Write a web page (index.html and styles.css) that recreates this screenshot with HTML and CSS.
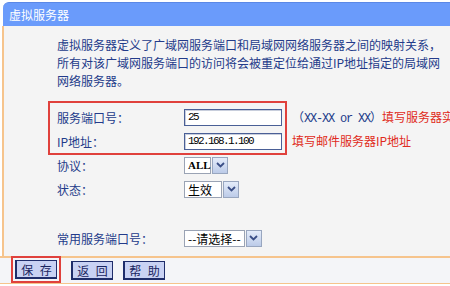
FILE: index.html
```html
<!DOCTYPE html>
<html lang="zh-CN">
<head>
    <meta charset="UTF-8">
    <title>虚拟服务器</title>
    <link rel="stylesheet" href="styles.css">
</head>
<body>
    <div class="panel">
        <div class="title">虚拟服务器</div>
        <div class="content">
            <p class="intro">虚拟服务器定义了广域网服务端口和局域网网络服务器之间的映射关系，<br>所有对该广域网服务端口的访问将会被重定位给通过IP地址指定的局域网<br>网络服务器。</p>

            <div class="marked-group">
                <div class="marked">
                    <div class="row">
                        <span class="label">服务端口号：</span>
                        <input class="field" type="text" value="25">
                    </div>
                    <div class="row">
                        <span class="label">IP地址：</span>
                        <input class="field" type="text" value="192.168.1.100">
                    </div>
                </div>
                <div class="hints">
                    <div class="hint"><span class="fmt">（<span class="latin">XX-XX or XX</span>）</span>填写服务器实际端口号</div>
                    <div class="hint">填写邮件服务器IP地址</div>
                </div>
            </div>

            <div class="row">
                <span class="label">协议：</span>
                <span class="select">
                    <span class="select-value mono-all">ALL</span>
                    <span class="select-btn"><svg width="9" height="6" viewBox="0 0 9 6"><path d="M1 1l3.5 3.5L8 1" fill="none" stroke="#3a4e86" stroke-width="1.8"/></svg></span>
                </span>
            </div>
            <div class="row">
                <span class="label">状态：</span>
                <span class="select">
                    <span class="select-value status">生效</span>
                    <span class="select-btn"><svg width="9" height="6" viewBox="0 0 9 6"><path d="M1 1l3.5 3.5L8 1" fill="none" stroke="#3a4e86" stroke-width="1.8"/></svg></span>
                </span>
            </div>

            <div class="row common">
                <span class="label">常用服务端口号：</span>
                <span class="select">
                    <span class="select-value">--请选择--</span>
                    <span class="select-btn"><svg width="9" height="6" viewBox="0 0 9 6"><path d="M1 1l3.5 3.5L8 1" fill="none" stroke="#3a4e86" stroke-width="1.8"/></svg></span>
                </span>
            </div>
        </div>
        <div class="actions">
            <span class="marked-btn"><button class="btn">保 存</button></span>
            <button class="btn">返 回</button>
            <button class="btn">帮 助</button>
        </div>
    </div>
</body>
</html>
```

FILE: styles.css
```css
body {
    margin: 0;
    background: #ffffff;
    font-family: "Noto Sans CJK SC", "Liberation Sans", sans-serif;
    font-size: 12px;
    color: #233b8a;
    overflow: hidden;
}
.panel {
    width: 480px;
    padding-top: 2px;
}
.title {
    margin-left: 3px;
    height: 23px;
    line-height: 23px;
    padding-left: 6px;
    background: #6a9bfb;
    border-top: 1px solid #5b88e6;
    border-radius: 6px 0 0 0;
    color: #ffffff;
    font-size: 12px;
}
.content {
    margin-left: 2px;
    border-left: 2px solid #f6c48c;
    background: #f4f4f4;
    padding: 10px 0 6px 53px;
}
.intro {
    margin: 0;
    line-height: 18px;
}
.marked-group {
    display: flex;
    margin: 11px 0 -2px -9px;
}
.marked {
    border: 2px solid #e0413c;
    padding: 2px 3px 0 7px;
}
.row {
    display: flex;
    align-items: center;
    height: 24px;
}
.label {
    width: 127px;
    flex: none;
}
.field {
    width: 98px;
    height: 17px;
    box-sizing: border-box;
    margin: 0;
    padding: 0 3px;
    border: 1px solid #4a5f96;
    box-shadow: inset 1px 1px 0 #c8cedc;
    background: #ffffff;
    color: #000000;
    font-family: "Liberation Mono", monospace;
    font-size: 11px;
    letter-spacing: -1.6px;
}
.hints {
    margin-left: 5px;
    padding-top: 4px;
    color: #e02a20;
    white-space: nowrap;
}
.hint {
    height: 24px;
    line-height: 24px;
}
.fmt {
    color: #233b8a;
}
.latin {
    font-family: "Liberation Mono", monospace;
    letter-spacing: -1.2px;
}
.select {
    display: flex;
    gap: 1px;
    height: 17px;
}
.select-value {
    height: 17px;
    box-sizing: border-box;
    padding: 0 3px;
    border: 1px solid #9aa3b4;
    background: #ffffff;
    color: #000000;
    line-height: 15px;
    white-space: nowrap;
}
.mono-all {
    width: 27px;
    font-family: "Liberation Serif", serif;
    font-weight: bold;
    font-size: 11px;
}
.status {
    width: 38px;
}
.select-btn {
    width: 16px;
    height: 17px;
    box-sizing: border-box;
    border: 1px solid #98a6bf;
    background: linear-gradient(#e4ecfa, #bccbe8);
    display: flex;
    align-items: center;
    justify-content: center;
}
.common {
    margin-top: 25px;
}
.actions {
    display: flex;
    align-items: center;
    gap: 10px;
    height: 25px;
    padding-left: 11px;
    background: #f4f5f8;
    border-top: 2px solid #f6c48c;
    border-bottom: 1px solid #f6c48c;
}
.marked-btn {
    margin-top: -2px;
    padding: 2px;
    border: 2px solid #e0413c;
    display: flex;
}
.btn {
    width: 42px;
    height: 19px;
    box-sizing: border-box;
    margin: 0;
    padding: 0;
    border: 1px solid #1f2d6a;
    border-left-width: 2px;
    border-bottom-width: 2px;
    background: #c9d2f3;
    color: #1a2560;
    font-family: "Noto Sans CJK SC", sans-serif;
    font-size: 12px;
    line-height: 15px;
    word-spacing: 4px;
    text-align: center;
    white-space: nowrap;
}
```
